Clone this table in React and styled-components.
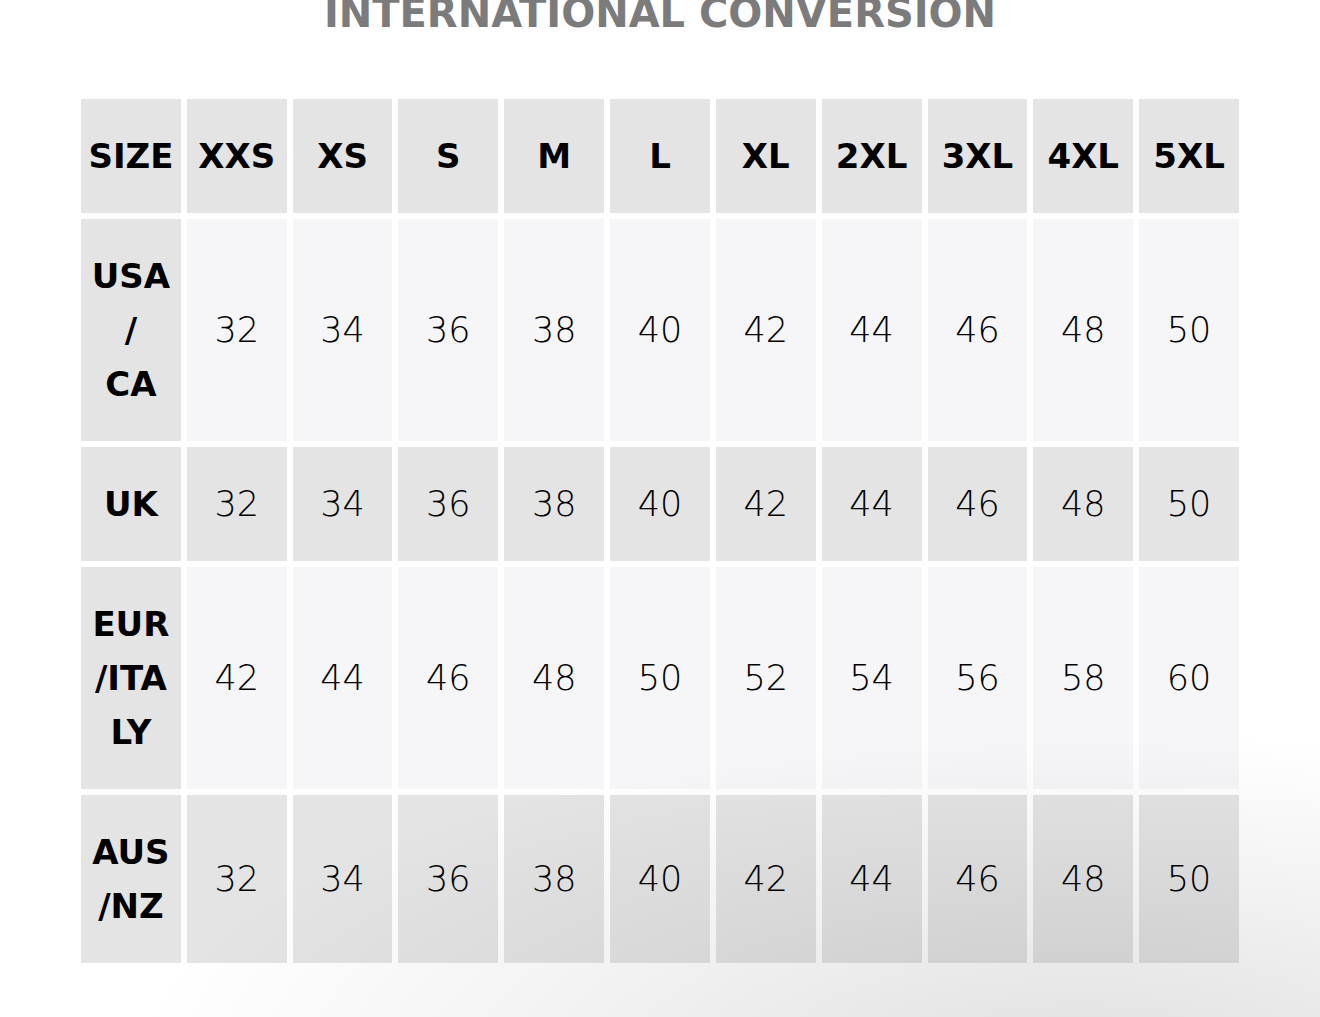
import React from "react";
import styled, { createGlobalStyle } from "styled-components";

const GlobalStyle = createGlobalStyle`
  html, body {
    margin: 0;
    padding: 0;
    background: #ffffff;
  }
  body {
    font-family: "DejaVu Sans", "Noto Sans", sans-serif;
    color: #000;
  }
`;

const Page = styled.div`
  position: relative;
  width: 1320px;
  height: 1017px;
  overflow: hidden;
  background: #ffffff;
`;

// soft grey shadow falling across the lower right of the picture
const Shade = styled.div`
  position: absolute;
  inset: 0;
  pointer-events: none;
  background: radial-gradient(
    ellipse 950px 330px at 1080px 1060px,
    rgba(0, 0, 0, 0.12) 0%,
    rgba(0, 0, 0, 0.05) 55%,
    rgba(0, 0, 0, 0) 100%
  );
`;

const Title = styled.h1`
  margin: -8px 0 0;
  text-align: center;
  font-family: "DejaVu Sans", sans-serif;
  font-weight: 700;
  font-size: 40px;
  line-height: 42px;
  color: #7b7b7b;
`;

const Table = styled.div`
  display: grid;
  grid-template-columns: repeat(11, 1fr);
  grid-template-rows: 114px 222px 114px 222px 168px;
  gap: 6px;
  width: 1158px;
  margin: 65px 0 0 81px;
`;

const Cell = styled.div`
  display: flex;
  flex-direction: column;
  align-items: center;
  justify-content: center;
  text-align: center;
  background: ${p => (p.$light ? "#f6f6f8" : "#e4e4e4")};
  font-family: "DejaVu Sans", sans-serif;
  font-weight: ${p => (p.$bold ? 700 : 300)};
  font-size: ${p => (p.$bold ? "34px" : "35px")};
  line-height: 54px;
  color: #000;
`;

const sizes = ["XXS", "XS", "S", "M", "L", "XL", "2XL", "3XL", "4XL", "5XL"];

const rows = [
  { label: ["USA", "/", "CA"], light: true, values: [32, 34, 36, 38, 40, 42, 44, 46, 48, 50] },
  { label: ["UK"], light: false, values: [32, 34, 36, 38, 40, 42, 44, 46, 48, 50] },
  { label: ["EUR", "/ITA", "LY"], light: true, values: [42, 44, 46, 48, 50, 52, 54, 56, 58, 60] },
  { label: ["AUS", "/NZ"], light: false, values: [32, 34, 36, 38, 40, 42, 44, 46, 48, 50] }
];

function App() {
  return (
    <Page>
      <GlobalStyle />
      <Title>INTERNATIONAL CONVERSION</Title>
      <Table>
        <Cell $bold>SIZE</Cell>
        {sizes.map(s => (
          <Cell $bold key={s}>
            {s}
          </Cell>
        ))}
        {rows.map(row => (
          <React.Fragment key={row.label.join("")}>
            <Cell $bold>
              {row.label.map(line => (
                <span key={line}>{line}</span>
              ))}
            </Cell>
            {row.values.map((v, i) => (
              <Cell $light={row.light} key={i}>
                {v}
              </Cell>
            ))}
          </React.Fragment>
        ))}
      </Table>
      <Shade />
    </Page>
  );
}

export default App;
